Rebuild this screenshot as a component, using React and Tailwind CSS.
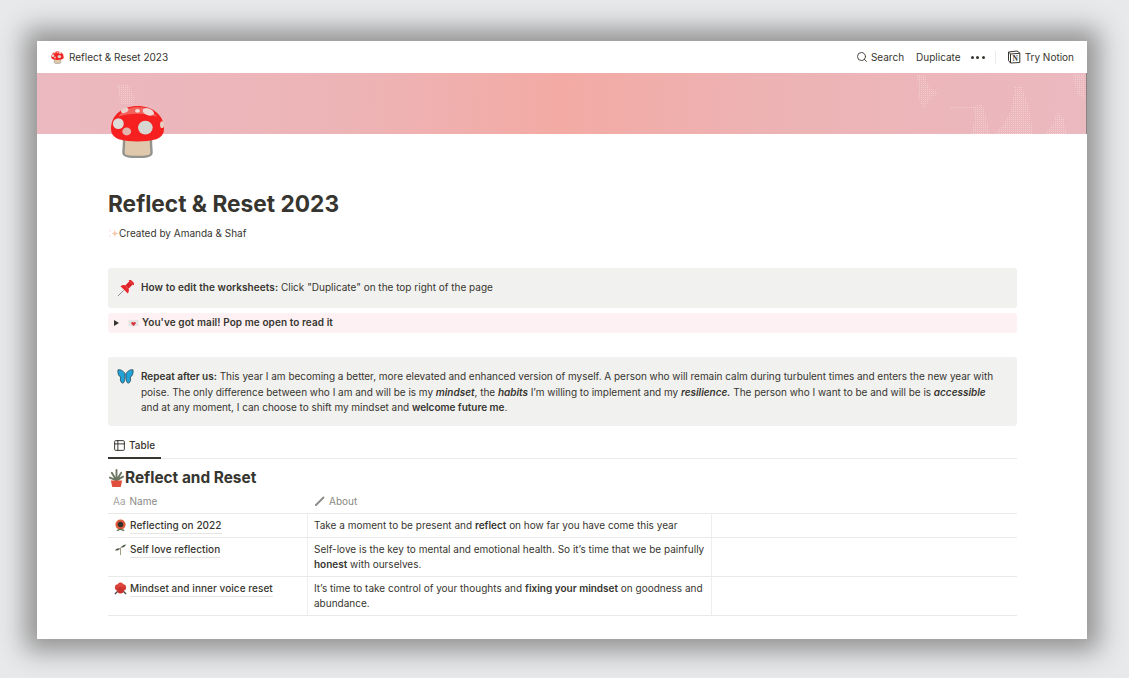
import React from 'react';
import { Search, Table2 } from 'lucide-react';

const Mushroom = ({ className }) => (
  <svg viewBox="0 0 56 54" className={className}>
    <path d="M14 32 C15 42 13 47 14 50 C15 54 41 54 42 50 C43 47 41 42 42 32 Z" fill="#dfc8ab" stroke="#94938e" strokeWidth="2.500" />
    <path d="M1 24 C1 10 13 1 28 1 C43 1 55 10 55 24 C55 30 52 33 47 35 C36 38 20 38 9 35 C4 33 1 30 1 24 Z" fill="#f5201f" />
    <path d="M8 12 C14 4 22 2 28 2 C36 2 43 5 48 12 C36 8 20 8 8 12 Z" fill="#f4605a" />
    <ellipse cx="8.500" cy="19" rx="5.500" ry="5.500" fill="#dddcd9" />
    <ellipse cx="36" cy="23" rx="7.500" ry="7" fill="#d6d6d2" />
    <ellipse cx="17" cy="27" rx="4.500" ry="4" fill="#e2b4ae" />
    <ellipse cx="39" cy="7" rx="6" ry="3.500" transform="rotate(20 39 7)" fill="#eed9d6" />
    <ellipse cx="15" cy="5.500" rx="4" ry="2.500" transform="rotate(-25 15 5.500)" fill="#eecfcb" />
    <ellipse cx="28" cy="6" rx="2.500" ry="1.800" fill="#f6dcd8" />
    <ellipse cx="53" cy="20" rx="2" ry="3.500" fill="#e6cfc0" />
  </svg>
);

const Sparkle = () => (
  <svg viewBox="0 0 12 12" className="w-[11px] h-[11px] shrink-0">
    <path d="M7.500 2 L8.500 5 L11.500 6 L8.500 7 L7.500 10 L6.500 7 L3.500 6 L6.500 5 Z" fill="#f3c9b0" />
    <path d="M2 2 L2.500 4 M2 8 L2.500 10" stroke="#f6d4d0" strokeWidth="1" />
  </svg>
);

const Pin = () => (
  <svg viewBox="0 0 18 18" className="w-[17px] h-[17px]">
    <path d="M1 17 L7 11" stroke="#8b8b8b" strokeWidth="1" />
    <g transform="rotate(45 9 9)">
      <rect x="5.500" y="-1.500" width="7" height="2.500" rx="1" fill="#e8282c" />
      <rect x="6.500" y="1" width="5" height="6" fill="#d9222a" />
      <path d="M3.500 11 C4 8.500 5.500 7 6.500 7 H11.500 C12.500 7 14 8.500 14.500 11 Z" fill="#e8282c" />
    </g>
  </svg>
);

const Envelope = () => (
  <svg viewBox="0 0 12 10" className="w-[11px] h-[9px]">
    <rect x="0.500" y="1" width="11" height="7" fill="#e6e3e3" />
    <path d="M6 8 L3.500 5 C3 3.500 5 2.800 6 4 C7 2.800 9 3.500 8.500 5 Z" fill="#d8343f" />
  </svg>
);

const Butterfly = () => (
  <svg viewBox="0 0 18 18" className="w-[17px] h-[17px]">
    <path d="M8.500 6 C7 3 3 1 1 2 C0.500 6 2 9 4 9.500 C3 12 4 16 6 16 C8 16 8.500 12 8.500 9 Z" fill="#22a3d8" stroke="#24404d" strokeWidth="0.800" />
    <path d="M9.500 6 C11 3 15 1 17 2 C17.500 6 16 9 14 9.500 C15 12 14 16 12 16 C10 16 9.500 12 9.500 9 Z" fill="#22a3d8" stroke="#24404d" strokeWidth="0.800" />
  </svg>
);

const Plant = () => (
  <svg viewBox="0 0 18 20" className="w-[17px] h-[19px] shrink-0">
    <path d="M9 12 L4 4 M9 12 L9 1 M9 12 L14 4 M9 12 L2 9 M9 12 L16 8" stroke="#6b7560" strokeWidth="2" strokeLinecap="round" />
    <path d="M3 12 H15 L13.500 19 H4.500 Z" fill="#e0503c" />
  </svg>
);

const Flower = () => (
  <svg viewBox="0 0 14 14" className="w-[13px] h-[13px]">
    <circle cx="7" cy="6" r="5.500" fill="#df5b3a" />
    <circle cx="7" cy="6" r="3" fill="#33302e" />
    <path d="M3 12.500 L7 11 L11 12.500" stroke="#5e6b4b" strokeWidth="1.200" fill="none" />
  </svg>
);

const Sprout = () => (
  <svg viewBox="0 0 14 14" className="w-[13px] h-[13px]">
    <path d="M7 5 V13" stroke="#9a9480" strokeWidth="1" />
    <path d="M7 5 C9 2.500 11 1.500 13 1.500 C12 4 10 5 7 5 Z" fill="#4e5840" />
    <path d="M6.500 6 C4.500 5 2.500 6 1 8 C3.500 8.500 5.500 8 6.500 6 Z" fill="#5b5648" />
  </svg>
);

const Rose = () => (
  <svg viewBox="0 0 14 14" className="w-[13px] h-[13px]">
    <path d="M1 13 L4 10 M13 13 L10 10" stroke="#4e4a44" strokeWidth="1.500" />
    <circle cx="4.500" cy="6" r="3.500" fill="#d63d36" />
    <circle cx="9.500" cy="6" r="3.500" fill="#d63d36" />
    <circle cx="7" cy="3.500" r="3" fill="#e0453d" />
    <circle cx="7" cy="9" r="3.500" fill="#c9332e" />
  </svg>
);

const NotionLogo = () => (
  <svg viewBox="0 0 14 14" className="w-[14px] h-[14px]">
    <path d="M1.500 2 L10 1 L12.800 3 V12.500 L3.500 13 L1.500 10.500 Z" fill="#fff" stroke="#37352f" strokeWidth="1" strokeLinejoin="round" />
    <path d="M1.500 2 L3.500 4 L12.800 3.300 M3.500 4 V13" stroke="#37352f" strokeWidth="1" fill="none" />
    <text x="8.200" y="11" textAnchor="middle" fontSize="7.500" fontWeight="700" fontFamily="'Liberation Serif', serif" fill="#37352f">N</text>
  </svg>
);

// dithered specks on the cover image
const CoverDots = () => (
  <svg width="1050" height="61" className="absolute inset-0">
    <defs>
      <pattern id="dots" width="2" height="2" patternUnits="userSpaceOnUse">
        <rect width="1" height="1" fill="#fbe6e4" />
      </pattern>
    </defs>
    <g fill="url(#dots)" opacity="0.5">
      <path d="M80 12 L92 12 L97 24 L96 32 L84 32 Z" />
      <path d="M880 2 L888 2 L892 14 L902 20 L894 26 L886 36 L882 26 Z" />
      <path d="M913 34 L936 34 L936 35 L913 35 Z" />
      <path d="M936 34 L945 30 L950 48 L953 61 L934 61 L938 46 Z" />
      <path d="M978 14 L985 14 L992 34 L996 61 L958 61 L966 52 L974 38 Z" />
      <path d="M1020 38 L1027 46 L1030 61 L1008 61 L1016 52 Z" />
      <path d="M1036 2 L1048 2 L1048 28 L1040 20 Z" />
    </g>
  </svg>
);

const rows = [
  {
    icon: <Flower />,
    name: 'Reflecting on 2022',
    about: <>Take a moment to be present and <b className="font-semibold">reflect</b> on how far you have come this year</>,
    h: 'h-[24px]',
  },
  {
    icon: <Sprout />,
    name: 'Self love reflection',
    about: <>Self-love is the key to mental and emotional health. So it’s time that we be painfully <b className="font-semibold">honest</b> with ourselves.</>,
    h: 'h-[39px]',
  },
  {
    icon: <Rose />,
    name: 'Mindset and inner voice reset',
    about: <>It’s time to take control of your thoughts and <b className="font-semibold">fixing your mindset</b> on goodness and abundance.</>,
    h: 'h-[39px]',
  },
];

export default function App() {
  return (
    <div className="w-[1129px] h-[678px] bg-[#e8e9eb] pl-[37px] pt-[41px] overflow-hidden font-['Inter',sans-serif] text-[#37352f]">
      <div className="w-[1050px] h-[598px] bg-white flex flex-col shadow-[0_0_24px_12px_#929292]">
        {/* top bar */}
        <div className="h-[32px] shrink-0 flex items-center pl-[14px] pr-[13px] text-[10px]">
          <Mushroom className="w-[13px] h-[13px] mr-[5px]" />
          <span>Reflect &amp; Reset 2023</span>
          <div className="ml-auto flex items-center">
            <Search size={12} strokeWidth={1.8} className="mr-[3px]" />
            <span>Search</span>
            <span className="ml-[12px]">Duplicate</span>
            <span className="ml-[10px] flex gap-[2.500px]">
              <i className="w-[3px] h-[3px] rounded-full bg-[#37352f]" />
              <i className="w-[3px] h-[3px] rounded-full bg-[#37352f]" />
              <i className="w-[3px] h-[3px] rounded-full bg-[#37352f]" />
            </span>
            <span className="ml-[10px] w-px h-[13px] bg-[#ececeb]" />
            <span className="ml-[11px] mr-[4px]"><NotionLogo /></span>
            <span>Try Notion</span>
          </div>
        </div>

        {/* cover */}
        <div className="relative h-[61px] shrink-0 bg-[linear-gradient(92deg,#ebb9c0_0%,#edb4b6_30%,#f3aaa4_50%,#edb3b4_70%,#ebb9c0_100%)] border-r border-r-[#8d8383]">
          <CoverDots />
        </div>

        {/* page */}
        <div className="pl-[71px] pr-[70px] flex flex-col">
          <Mushroom className="w-[55px] h-[53px] ml-[2px] -mt-[29px] relative" />

          <h1 className="mt-[31px] text-[22.700px] leading-[30px] font-bold">Reflect &amp; Reset 2023</h1>

          <div className="mt-[6px] flex items-center text-[10px] leading-[16px]">
            <Sparkle />
            <span>Created by Amanda &amp; Shaf</span>
          </div>

          <div className="mt-[27px] h-[40px] bg-[#f1f1ef] rounded-[3px] flex items-center pl-[9px] text-[10px]">
            <Pin />
            <p className="ml-[7px] -mt-[1px]"><b className="font-semibold tracking-[0.08px]">How to edit the worksheets:</b> Click "Duplicate" on the top right of the page</p>
          </div>

          <div className="mt-[5px] h-[20px] bg-[#fdf1f3] rounded-[3px] flex items-center pl-[6px] text-[10px] font-semibold tracking-[0.08px]">
            <span className="w-0 h-0 border-y-[3px] border-y-transparent border-l-[5px] border-l-[#37352f]" />
            <span className="ml-[9px] mr-[3px]"><Envelope /></span>
            <span className="-mt-[1px]">You've got mail! Pop me open to read it</span>
          </div>

          <div className="mt-[24px] h-[69px] bg-[#f1f1ef] rounded-[3px] flex pl-[9px] pr-[16px] pt-[12px] text-[10px] leading-[15.500px]">
            <span className="shrink-0 -mt-[1px]"><Butterfly /></span>
            <p className="ml-[7px] tracking-[-0.025px]">
              <b className="font-semibold">Repeat after us:</b> This year I am becoming a better, more elevated and enhanced version of myself. A person who will remain calm during turbulent times and enters the new year with poise. The only difference between who I am and will be is my <b className="font-semibold italic">mindset</b>, the <b className="font-semibold italic">habits</b> I’m willing to implement and my <b className="font-semibold italic">resilience.</b> The person who I want to be and will be is <b className="font-semibold italic">accessible</b> and at any moment, I can choose to shift my mindset and <b className="font-semibold">welcome future me</b>.
            </p>
          </div>

          {/* tabs */}
          <div className="mt-[11px] h-[22px] border-b border-[#e9e9e7] flex">
            <div className="w-[53px] h-[22px] border-b-2 border-[#37352f] flex items-center pl-[5px] pb-[3px] text-[10px] font-medium">
              <Table2 size={13} strokeWidth={1.8} className="mr-[3px]" />
              Table
            </div>
          </div>

          <div className="mt-[9px] h-[20px] flex items-center text-[15.400px] font-bold">
            <Plant />
            Reflect and Reset
          </div>

          {/* table */}
          <div className="mt-[1px] h-[25px] border-b border-[#e9e9e7] flex items-center text-[10px] text-[#8a8984]">
            <div className="w-[200px] pl-[5px] flex items-center">
              <span className="text-[#a5a4a0] mr-[4px]">Aa</span>Name
            </div>
            <div className="pl-[6px] flex items-center">
              <svg viewBox="0 0 12 12" className="w-[12px] h-[12px] mr-[3px]">
                <path d="M1.500 10.500 L10 2" stroke="#8a8984" strokeWidth="1.800" />
                <path d="M1 11 L1.500 9.500 L2.500 10.500 Z" fill="#8a8984" />
              </svg>
              About
            </div>
          </div>
          {rows.map((r) => (
            <div key={r.name} className={`${r.h} border-b border-[#e9e9e7] flex text-[10px] leading-[15px]`}>
              <div className="w-[200px] shrink-0 border-r border-[#eeeeec] pl-[6px] pt-[4px] flex items-start font-medium tracking-[0.05px]">
                <span className="w-[13px] h-[13px] mt-[1px] mr-[3px]">{r.icon}</span>
                <span className="border-b border-[#e4e4e2]">{r.name}</span>
              </div>
              <div className="w-[404px] shrink-0 border-r border-[#eeeeec] px-[6px] pt-[4px]">{r.about}</div>
              <div className="flex-1" />
            </div>
          ))}
        </div>
      </div>
    </div>
  );
}
